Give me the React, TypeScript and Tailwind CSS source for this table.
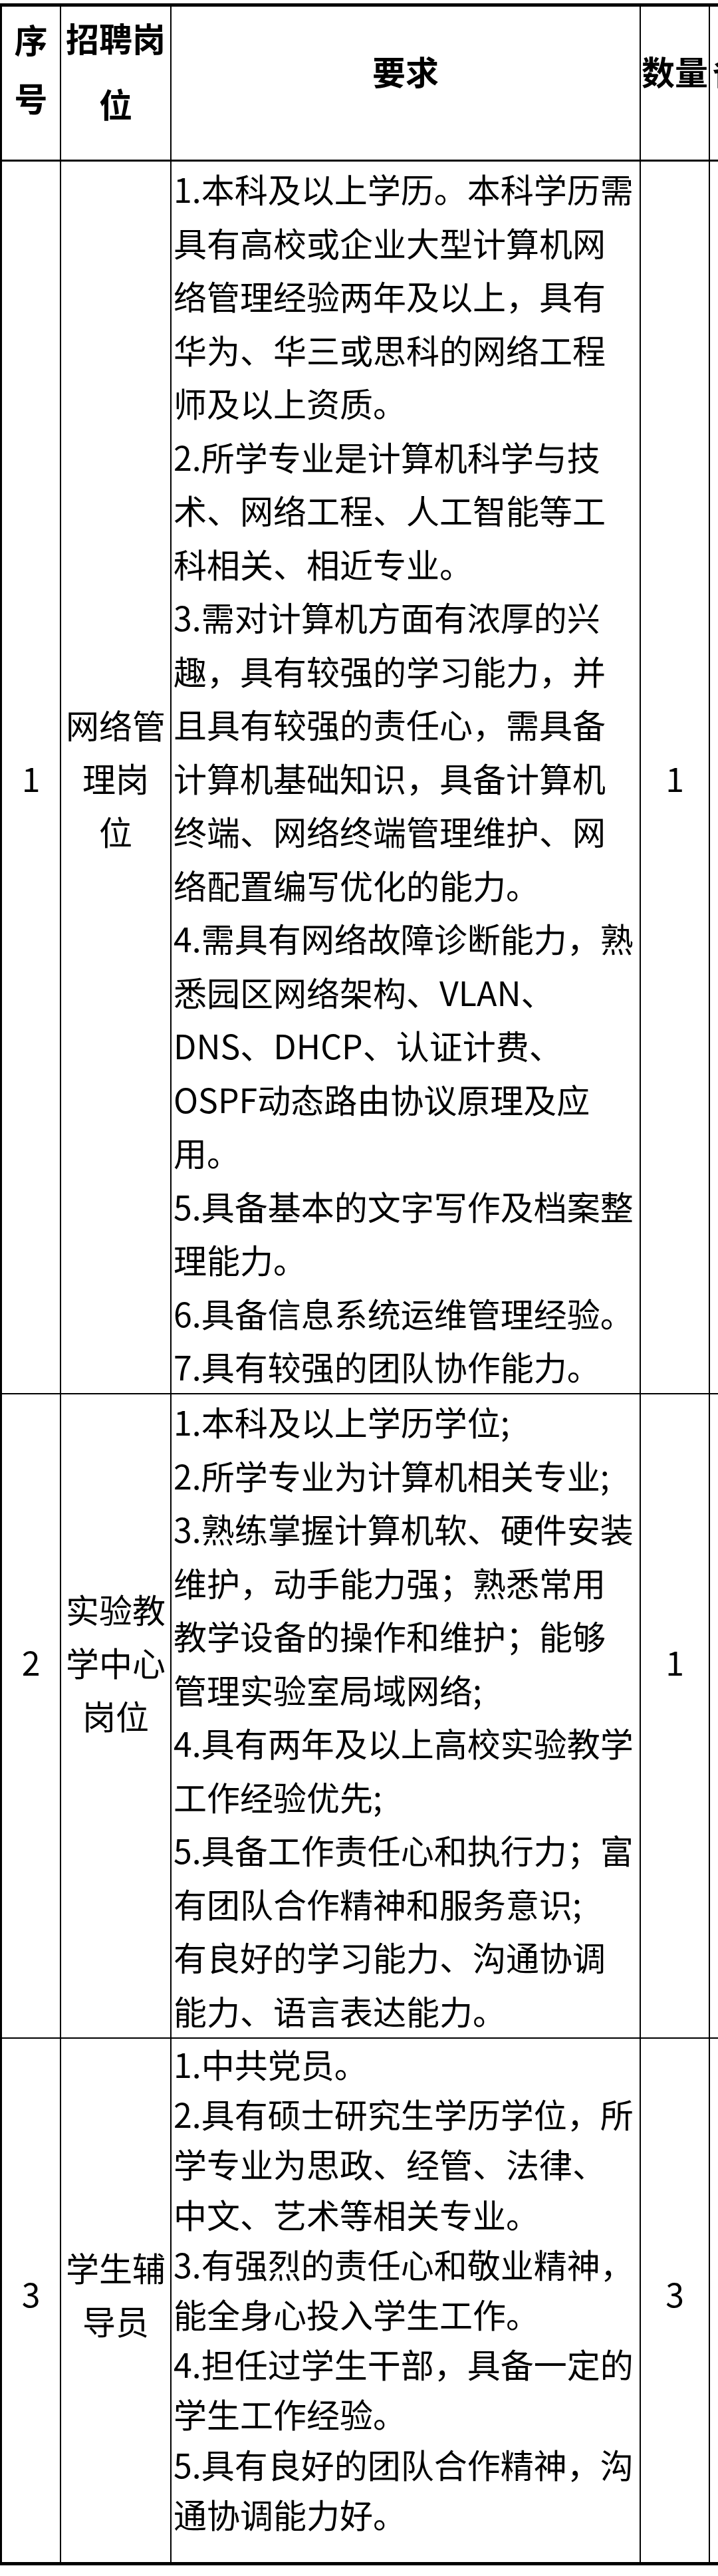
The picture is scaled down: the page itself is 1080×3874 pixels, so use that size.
import React from "react";

type Row = {
  no: string;
  pos: string[];
  qty: string;
  h: string;
  lh: string;
  border: string;
  side: string;
  lines: string[];
};

const rows: Row[] = [
  {
    no: "1",
    pos: ["网络管", "理岗", "位"],
    qty: "1",
    h: "h-[1854px]",
    lh: "leading-[80.5px]",
    border: "border-b-2",
    side: "",
    lines: [
      "1.本科及以上学历。本科学历需",
      "具有高校或企业大型计算机网",
      "络管理经验两年及以上，具有",
      "华为、华三或思科的网络工程",
      "师及以上资质。",
      "2.所学专业是计算机科学与技",
      "术、网络工程、人工智能等工",
      "科相关、相近专业。",
      "3.需对计算机方面有浓厚的兴",
      "趣，具有较强的学习能力，并",
      "且具有较强的责任心，需具备",
      "计算机基础知识，具备计算机",
      "终端、网络终端管理维护、网",
      "络配置编写优化的能力。",
      "4.需具有网络故障诊断能力，熟",
      "悉园区网络架构、VLAN、",
      "DNS、DHCP、认证计费、",
      "OSPF动态路由协议原理及应",
      "用。",
      "5.具备基本的文字写作及档案整",
      "理能力。",
      "6.具备信息系统运维管理经验。",
      "7.具有较强的团队协作能力。",
    ],
  },
  {
    no: "2",
    pos: ["实验教", "学中心", "岗位"],
    qty: "1",
    h: "h-[969px]",
    lh: "leading-[80.5px]",
    border: "border-b-2",
    side: "pb-[164px]",
    lines: [
      "1.本科及以上学历学位;",
      "2.所学专业为计算机相关专业;",
      "3.熟练掌握计算机软、硬件安装",
      "维护，动手能力强；熟悉常用",
      "教学设备的操作和维护；能够",
      "管理实验室局域网络;",
      "4.具有两年及以上高校实验教学",
      "工作经验优先;",
      "5.具备工作责任心和执行力；富",
      "有团队合作精神和服务意识;",
      "有良好的学习能力、沟通协调",
      "能力、语言表达能力。",
    ],
  },
  {
    no: "3",
    pos: ["学生辅", "导员"],
    qty: "3",
    h: "h-[787px]",
    lh: "leading-[75.2px]",
    border: "",
    side: "pb-[22px]",
    lines: [
      "1.中共党员。",
      "2.具有硕士研究生学历学位，所",
      "学专业为思政、经管、法律、",
      "中文、艺术等相关专业。",
      "3.有强烈的责任心和敬业精神，",
      "能全身心投入学生工作。",
      "4.担任过学生干部，具备一定的",
      "学生工作经验。",
      "5.具有良好的团队合作精神，沟",
      "通协调能力好。",
    ],
  },
];

export default function App() {
  return (
    <div className="w-[1080px] h-[3874px] overflow-hidden bg-white pt-[5px] text-black font-['Noto_Sans_CJK_SC','Noto_Sans',sans-serif]">
      <div className="w-[1200px] border-t-[5px] border-b-[5px] border-l-[3px] border-black">
        {/* header */}
        <div className="flex h-[233px] border-b-[3px] border-black font-bold text-[50px]">
          <div className="w-[89px] shrink-0 border-r-2 border-black flex flex-col items-center pt-[18px]">
            <div className="leading-[60px]">序</div>
            <div className="leading-[60px] mt-[28px]">号</div>
          </div>
          <div className="w-[166px] shrink-0 border-r-2 border-black flex flex-col items-center pt-[16px]">
            <div className="leading-[60px] whitespace-nowrap">招聘岗</div>
            <div className="leading-[60px] mt-[39px]">位</div>
          </div>
          <div className="w-[706px] shrink-0 border-r-2 border-black flex justify-center pt-[66px]">
            <div className="leading-[60px]">要求</div>
          </div>
          <div className="w-[104px] shrink-0 border-r-2 border-black flex justify-center pt-[66px]">
            <div className="leading-[60px] whitespace-nowrap">数量</div>
          </div>
          <div className="flex-1 pl-[4px] pt-[66px]">
            <div className="leading-[60px] whitespace-nowrap">备注</div>
          </div>
        </div>
        {rows.map((r) => (
          <div key={r.no} className={`flex ${r.h} ${r.border} border-black text-[50px]`}>
            <div className={`w-[89px] shrink-0 border-r-2 border-black flex items-center justify-center ${r.side}`}>
              <div className="leading-[80.5px]">{r.no}</div>
            </div>
            <div className={`w-[166px] shrink-0 border-r-2 border-black flex flex-col items-center justify-center ${r.side}`}>
              {r.pos.map((p, i) => (
                <div key={i} className="leading-[80px] whitespace-nowrap">
                  {p}
                </div>
              ))}
            </div>
            <div className={`w-[706px] shrink-0 border-r-2 border-black pl-[3px] ${r.lh}`}>
              {r.lines.map((l, i) => (
                <div key={i} className="whitespace-nowrap">
                  {l}
                </div>
              ))}
            </div>
            <div className={`w-[104px] shrink-0 border-r-2 border-black flex items-center justify-center ${r.side}`}>
              <div className="leading-[80.5px]">{r.qty}</div>
            </div>
            <div className="flex-1" />
          </div>
        ))}
      </div>
    </div>
  );
}
